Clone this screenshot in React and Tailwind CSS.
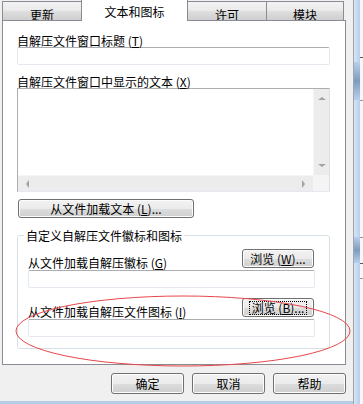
const btn =
  "flex items-center justify-center rounded-[3px] border border-[#707070] bg-[linear-gradient(#f2f2f2_0%,#ebebeb_50%,#dddddd_51%,#cfcfcf_100%)] shadow-[inset_0_0_0_1px_#fcfcfc]";

function Mn({ text, k, tail = "" }) {
  return (
    <span className="whitespace-nowrap">
      {text} (<u>{k}</u>){tail}
    </span>
  );
}

function Tab({ label, active, w }) {
  if (active) {
    return (
      <div
        className={`${w} h-[21px] -mb-px relative z-10 bg-white border-x border-[#898c95] flex justify-center pt-[5px]`}
      >
        {label}
      </div>
    );
  }
  return (
    <div
      className={`${w} h-[19px] border border-b-0 border-[#898c95] bg-[linear-gradient(#f2f2f2_0%,#ebebeb_45%,#dddddd_55%,#cfcfcf_100%)] flex justify-center pt-[6px]`}
    >
      {label}
    </div>
  );
}

function Field({ className = "" }) {
  return (
    <div
      className={`h-[18px] rounded-[2px] border border-[#e3e9ef] border-t-[#abadb3] bg-white ${className}`}
    />
  );
}

function TextArea() {
  return (
    <div className="h-[104px] w-[313px] border border-[#abadb3] border-r-[#dbdfe6] border-b-[#e3e9ef] flex flex-col bg-white">
      <div className="flex flex-1">
        <div className="flex-1" />
        <div className="w-[16px] bg-[#ececec] border-l border-[#f5f5f5] flex flex-col items-center justify-between py-[8px]">
          <div className="w-0 h-0 border-x-[4px] border-x-transparent border-b-[3px] border-b-[#a2a2a2]" />
          <div className="w-0 h-0 border-x-[4px] border-x-transparent border-t-[3px] border-t-[#a2a2a2]" />
        </div>
      </div>
      <div className="flex h-[16px]">
        <div className="flex-1 bg-[#ececec] border-t border-[#f5f5f5] flex items-center justify-between px-[8px]">
          <div className="w-0 h-0 border-y-[4px] border-y-transparent border-r-[3px] border-r-[#a2a2a2]" />
          <div className="w-0 h-0 border-y-[4px] border-y-transparent border-l-[3px] border-l-[#a2a2a2]" />
        </div>
        <div className="w-[16px] bg-[#f4f4f4]" />
      </div>
    </div>
  );
}

function BrowseRow({ label, k, focused }) {
  return (
    <div className="flex items-end h-[19px]">
      <div className="mb-[-1px]">
        <Mn text={label} k={k} />
      </div>
      <div
        className={`ml-auto mr-[1px] w-[72px] h-[19px] ${btn} ${
          focused ? "border-[#3c7fb1] shadow-[inset_0_0_0_1px_#a6d8f5]" : ""
        }`}
      >
        <span
          className={`px-[2px] leading-[12px] ${
            focused ? "outline outline-1 outline-dotted outline-black" : ""
          }`}
        >
          <Mn text="浏览" k={k === "G" ? "W" : "B"} tail="..." />
        </span>
      </div>
    </div>
  );
}

function Panel() {
  return (
    <div className="ml-[2px] w-[344px] h-[345px] border border-[#898c95] bg-white pl-[14px] pt-[13px]">
      <Mn text="自解压文件窗口标题" k="T" />
      <Field className="w-[313px]" />
      <div className="mt-[10px]">
        <Mn text="自解压文件窗口中显示的文本" k="X" />
      </div>
      <TextArea />
      <div className={`${btn} mt-[7px] ml-[1px] w-[176px] h-[19px]`}>
        <Mn text="从文件加载文本" k="L" tail="..." />
      </div>
      <div className="relative mt-[17px] w-[313px] h-[114px] border border-[#d5dfe5] rounded-[3px] pl-[10px] pr-[14px] pt-[13px]">
        <div className="absolute left-[6px] -top-[7px] bg-white px-[2px]">
          自定义自解压文件徽标和图标
        </div>
        <BrowseRow label="从文件加载自解压徽标" k="G" />
        <Field className="mt-[2px]" />
        <div className="mt-[10px]">
          <BrowseRow label="从文件加载自解压文件图标" k="I" focused />
        </div>
        <Field className="mt-[2px]" />
      </div>
    </div>
  );
}

function RightStrip() {
  return (
    <div className="w-[10px] flex">
      <div className="w-[1px] bg-[#9fa5ad]" />
      <div className="w-[6px] flex flex-col bg-[linear-gradient(90deg,#d6e5f5,#b7cfeb)]">
        <div className="h-[62px]" />
        <div className="h-[38px] bg-[linear-gradient(#b7cfeb,#7e9cc0,#b7cfeb)]" />
        <div className="h-[137px]" />
        <div className="h-[26px] bg-[linear-gradient(#b7cfeb,#7e9cc0,#b7cfeb)]" />
      </div>
      <div className="w-[3px] bg-[#f7f7f7] flex flex-col">
        <div className="h-[57px]" />
        <div className="h-[1px] bg-[#555]" />
        <div className="h-[42px]" />
        <div className="h-[1px] bg-[#999]" />
        <div className="h-[136px]" />
        <div className="h-[1px] bg-[#999]" />
        <div className="h-[25px]" />
        <div className="h-[1px] bg-[#555]" />
        <div className="h-[14px]" />
        <div className="h-[1px] bg-[#999]" />
      </div>
    </div>
  );
}

export default function App() {
  return (
    <div className="relative w-[363px] h-[404px] overflow-hidden bg-[#f0f0f0] flex font-['Noto_Sans_CJK_SC',sans-serif] text-[12px] leading-[13px] text-black">
      <div className="w-[353px] flex flex-col">
        <div className="h-[20px] flex items-end pl-[2px]">
          <Tab label="更新" w="w-[80px]" />
          <Tab label="文本和图标" active w="w-[107px] -ml-px" />
          <Tab label="许可" w="w-[80px] -ml-px" />
          <Tab label="模块" w="w-[78px] -ml-px" />
        </div>
        <Panel />
        <div className="mt-[8px] flex justify-end gap-[8px] pr-[7px]">
          <div className={`${btn} w-[73px] h-[21px]`}>确定</div>
          <div className={`${btn} w-[73px] h-[21px]`}>取消</div>
          <div className={`${btn} w-[73px] h-[21px]`}>帮助</div>
        </div>
        <div className="mt-auto h-[3px] bg-[#b4cde9]" />
      </div>
      <RightStrip />
      <svg
        className="absolute left-0 top-0 pointer-events-none"
        width="363"
        height="404"
      >
        <ellipse
          cx="183"
          cy="331"
          rx="167"
          ry="35"
          fill="none"
          stroke="#e8474a"
          strokeWidth="1"
        />
      </svg>
    </div>
  );
}
